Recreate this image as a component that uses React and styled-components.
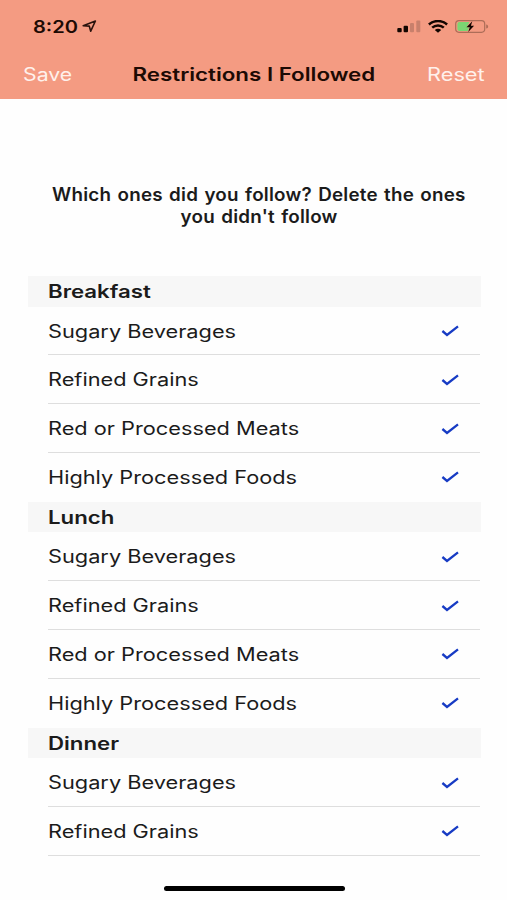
import styled, { createGlobalStyle } from 'styled-components';

const restrictions = [
  'Sugary Beverages',
  'Refined Grains',
  'Red or Processed Meats',
  'Highly Processed Foods',
];

const meals = [
  { name: 'Breakfast', items: restrictions },
  { name: 'Lunch', items: restrictions },
  { name: 'Dinner', items: restrictions.slice(0, 2) },
];

function App() {
  return (
    <Screen>
      <GlobalStyle />
      <Header>
        <StatusBar>
          <Clock>
            <Wide $scale={1.18} $weight={600}>
              8:20
            </Wide>
          </Clock>
          <LocationIcon />
          <StatusIcons>
            <SignalIcon />
            <WifiIcon />
            <BatteryIcon />
          </StatusIcons>
        </StatusBar>
        <NavBar>
          <NavButton>
            <Wide $scale={1.18}>Save</Wide>
          </NavButton>
          <Title>
            <Wide $scale={1.24} $weight={600} $origin="center">
              Restrictions I Followed
            </Wide>
          </Title>
          <NavButton>
            <Wide $scale={1.21} $origin="right">
              Reset
            </Wide>
          </NavButton>
        </NavBar>
      </Header>
      <Question>
        <Wide $scale={1.045} $weight={600} $origin="center">
          Which ones did you follow? Delete the ones
        </Wide>
        <Wide $scale={1.045} $weight={600} $origin="center">
          you didn't follow
        </Wide>
      </Question>
      <List>
        {meals.map((meal) => (
          <Meal key={meal.name} meal={meal} />
        ))}
      </List>
      <HomeBar />
    </Screen>
  );
}

function Meal({ meal }) {
  return (
    <section>
      <MealName>
        <Wide $scale={1.235} $weight={600}>
          {meal.name}
        </Wide>
      </MealName>
      <Rows>
        {meal.items.map((item, index) => (
          <Row key={item} $line={index < 3}>
            <Wide $scale={1.208}>{item}</Wide>
            <CheckIcon />
          </Row>
        ))}
      </Rows>
    </section>
  );
}

function LocationIcon() {
  return (
    <svg width="15" height="13" viewBox="0 0 15 13">
      <path
        d="M1.2 5.7 13.4 1 8.7 11.2 7.3 6.1Z"
        fill="none"
        stroke="#2a120c"
        strokeWidth="1.6"
        strokeLinejoin="round"
      />
    </svg>
  );
}

function SignalIcon() {
  return (
    <svg width="24" height="13" viewBox="0 0 24 13">
      <rect x="0.3" y="8" width="4.4" height="4.2" rx="1" fill="#120500" />
      <rect x="6.6" y="5.7" width="4.4" height="6.5" rx="1" fill="#120500" />
      <rect x="13" y="3" width="4" height="9.2" rx="1" fill="#c8806c" />
      <rect x="19.3" y="0.6" width="4" height="11.6" rx="1" fill="#c8806c" />
    </svg>
  );
}

function WifiIcon() {
  return (
    <svg width="20" height="13" viewBox="0 0 20 13">
      <g fill="none" stroke="#120500" strokeWidth="2.5">
        <path d="M0.9 4.5C6 -0.1 14 -0.1 19.1 4.5" />
        <path d="M4.2 7.7C7.5 4.7 12.5 4.7 15.8 7.7" />
      </g>
      <path d="M6.8 9.9C8.6 8.4 11.4 8.4 13.2 9.9L10 12.8Z" fill="#120500" />
    </svg>
  );
}

function BatteryIcon() {
  return (
    <svg width="34" height="13" viewBox="0 0 34 13">
      <rect
        x="0.7"
        y="0.7"
        width="29"
        height="11.6"
        rx="3.2"
        fill="none"
        stroke="#ad6d58"
        strokeWidth="1.2"
      />
      <path d="M31.2 4.4C33.8 5 33.8 8 31.2 8.6Z" fill="#ad6d58" />
      <path
        d="M4.4 2.1H14.5L11.7 7.3H14.2L12.7 10.9H4.4Q2.4 10.9 2.4 9V4Q2.4 2.1 4.4 2.1Z"
        fill="#7bd672"
      />
      <path d="M17.3 1.2 11.5 7.3H14.8L13.2 11.9 19.1 5.7H15.9Z" fill="#120500" />
    </svg>
  );
}

function CheckIcon() {
  return (
    <svg width="18" height="12" viewBox="0 0 18 12">
      <path
        d="M1.4 6 6 9.9 17 1.3"
        fill="none"
        stroke="#173bc4"
        strokeWidth="2.3"
      />
    </svg>
  );
}

const GlobalStyle = createGlobalStyle`
  body {
    margin: 0;
    background: #fefefe;
  }
`;

const Screen = styled.main`
  display: flex;
  flex-direction: column;
  width: 507px;
  height: 900px;
  overflow: hidden;
  background: #fefefe;
  color: #1b1b1b;
  font-family: Inter, 'Liberation Sans', sans-serif;
  font-size: 18px;
`;

/* Letters are drawn wider than the font's own proportions. */
const Wide = styled.span`
  display: inline-block;
  font-weight: ${(props) => props.$weight || 400};
  white-space: nowrap;
  transform: scaleX(${(props) => props.$scale});
  transform-origin: ${(props) => props.$origin || 'left'};
`;

const Header = styled.header`
  flex: none;
  height: 98.5px;
  background: #f49b82;
  color: #1c0a04;
`;

const StatusBar = styled.div`
  display: flex;
  align-items: center;
  height: 52px;
  padding: 1px 18px 0 33px;
  box-sizing: border-box;
`;

const Clock = styled.div`
  width: 49px;
  font-size: 17px;
`;

const StatusIcons = styled.div`
  display: flex;
  align-items: center;
  gap: 7px;
  margin-left: auto;
`;

const NavBar = styled.nav`
  display: grid;
  grid-template-columns: 70px 1fr 70px;
  align-items: center;
  height: 44px;
  padding: 0 22px 0 23px;
`;

const NavButton = styled.button`
  padding: 0;
  border: 0;
  background: none;
  color: #fff1ec;
  font: inherit;
  text-align: left;

  &:last-child {
    text-align: right;
  }
`;

const Title = styled.h1`
  margin: 0;
  font-size: 18px;
  text-align: center;
`;

const Question = styled.h2`
  display: flex;
  flex-direction: column;
  align-items: center;
  margin: 85.5px 0 0 11px;
  font-size: 18px;
  line-height: 22px;
  letter-spacing: 0.2px;
  word-spacing: 1.3px;
`;

const List = styled.div`
  margin: 48px 26px 0 28px;
`;

const MealName = styled.h3`
  display: flex;
  align-items: center;
  box-sizing: border-box;
  height: 30.6px;
  margin: 0;
  padding: 1px 0 0 20px;
  background: #f7f7f7;
  font-size: 18px;
`;

const Rows = styled.ul`
  margin: 0 1px 0 20px;
  padding: 0;
  list-style: none;
`;

const Row = styled.li`
  display: flex;
  align-items: center;
  justify-content: space-between;
  box-sizing: border-box;
  height: 48.8px;
  padding: 1.2px 21.5px 0 0.3px;
  border-bottom: 1px solid ${(props) => (props.$line ? '#dedede' : 'transparent')};
`;

const HomeBar = styled.div`
  width: 181px;
  height: 5px;
  margin: auto auto 9px 164px;
  border-radius: 3px;
  background: #000;
`;

export default App;
